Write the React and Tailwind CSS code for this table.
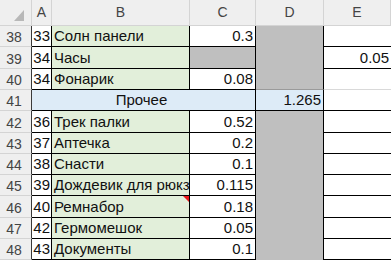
const font = { fontFamily: '"Liberation Sans", "Noto Sans", Arial, sans-serif' }

const grid = "grid grid-cols-[32px_20px_138px_66px_68px_67px]"

const rows = [
  { n: 38, h: "h-[21px]", a: "33", b: "Солн панели", c: "0.3", e: "" },
  { n: 39, h: "h-[22px]", a: "34", b: "Часы", c: null, e: "0.05" },
  { n: 40, h: "h-[21px]", a: "34", b: "Фонарик", c: "0.08", e: "", lastGray: true },
  { n: 41, h: "h-[21px]", group: "Прочее", d: "1.265", e: "" },
  { n: 42, h: "h-[22px]", a: "36", b: "Трек палки", c: "0.52", e: "" },
  { n: 43, h: "h-[21px]", a: "37", b: "Аптечка", c: "0.2", e: "" },
  { n: 44, h: "h-[21px]", a: "38", b: "Снасти", c: "0.1", e: "" },
  { n: 45, h: "h-[21px]", a: "39", b: "Дождевик для рюкзака", c: "0.115", e: "" },
  { n: 46, h: "h-[22px]", a: "40", b: "Ремнабор", c: "0.18", e: "", note: true },
  { n: 47, h: "h-[21px]", a: "42", b: "Гермомешок", c: "0.05", e: "" },
  { n: 48, h: "h-[21px]", a: "43", b: "Документы", c: "0.1", e: "" },
]

function HeaderCell({ label, className = "" }) {
  return (
    <div className={`flex items-center justify-center border-r border-b border-[#d4d4d4] bg-[#efefef] text-[14px] text-[#444] ${className}`}>
      {label}
    </div>
  )
}

function RowNumber({ n }) {
  return (
    <div className="flex items-end justify-center pb-[2px] pr-[3px] border-r border-r-[#3a3a3a] border-b border-b-[#d4d4d4] bg-[#efefef] text-[14px] text-[#444] leading-none">
      {n}
    </div>
  )
}

function SheetRow({ row }) {
  const cell = "flex items-end pb-[3px] leading-none text-[15px] text-[#111] overflow-hidden whitespace-nowrap"
  const dCell = row.d ? (
    <div className={`${cell} justify-end pr-[2px] bg-[#ddebf7] border-r border-b border-black text-[#1f2a3a]`}>
      {row.d}
    </div>
  ) : (
    <div className={`bg-[#bfbfbf] border-r border-black ${row.lastGray ? "border-b border-b-[#9a9a9a]" : ""}`} />
  )

  return (
    <div className={`${grid} ${row.h}`}>
      <RowNumber n={row.n} />
      {row.group ? (
        // merged A:C group title
        <div className={`${cell} col-span-3 justify-center pr-[4px] bg-[#ddebf7] border-r border-b border-black`}>
          {row.group}
        </div>
      ) : (
        <>
          <div className={`${cell} justify-end pr-[1px] bg-white border-r border-b border-black`}>
            {row.a}
          </div>
          <div className={`${cell} relative pl-[2px] bg-[#e2efda] border-r border-b border-black`}>
            {row.b}
            {row.note && (
              <svg className="absolute top-0 right-0" width="6" height="6" viewBox="0 0 6 6">
                <polygon points="0,0 6,0 6,6" fill="#e8171c" />
              </svg>
            )}
          </div>
          {row.c === null ? (
            <div className="bg-[#bfbfbf] border-r border-b border-black" />
          ) : (
            <div className={`${cell} justify-end pr-[2px] bg-white border-r border-b border-black`}>
              {row.c}
            </div>
          )}
        </>
      )}
      {dCell}
      <div className={`${cell} justify-end pr-[2px] bg-white border-b ${row.lastGray ? "border-[#d9d9d9]" : "border-black"}`}>
        {row.e}
      </div>
    </div>
  )
}

export default function App() {
  return (
    <div className="w-[391px] h-[262px] bg-white overflow-hidden" style={font}>
      <div className={`${grid} h-[26px]`}>
        <div className="relative border-r border-b border-[#d4d4d4] bg-[#efefef]">
          <svg className="absolute left-[14px] top-[10px]" width="10" height="11" viewBox="0 0 10 11">
            <polygon points="10,0 10,11 0,11" fill="#b8b8b8" />
          </svg>
        </div>
        <HeaderCell label="A" />
        <HeaderCell label="B" />
        <HeaderCell label="C" />
        <HeaderCell label="D" />
        <HeaderCell label="E" />
      </div>
      {rows.map(row => (
        <SheetRow key={row.n} row={row} />
      ))}
    </div>
  )
}
